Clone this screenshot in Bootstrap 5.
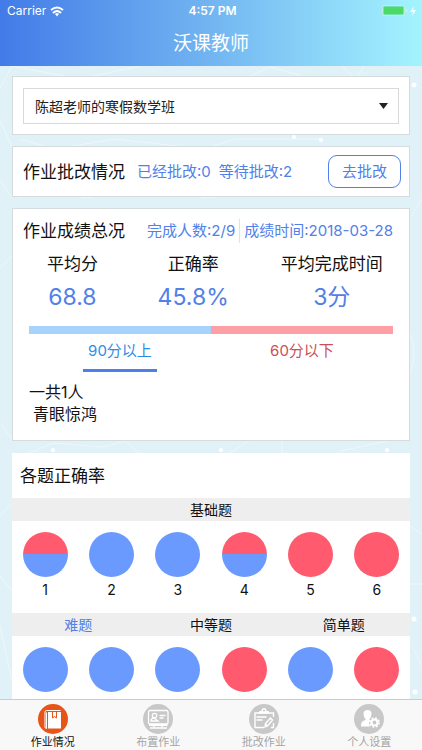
<!DOCTYPE html>
<html lang="zh-CN">
<head>
<meta charset="utf-8">
<meta name="viewport" content="width=device-width, initial-scale=1">
<title>沃课教师</title>
<link href="https://cdn.jsdelivr.net/npm/bootstrap@5.3.0/dist/css/bootstrap.min.css" rel="stylesheet">
<style>
body { font-family: Inter, "Noto Sans CJK SC", sans-serif; font-size: 16px; line-height: 22px; color: #111; background: #e0f1f7; }
.app-shell { height: 100vh; overflow: hidden; }
.app-header { background: linear-gradient(90deg, #427be8, #72b5f1 50%, #a4f4ff); }
.status-bar { font-size: 12px; line-height: 22px; padding: 0 4px 0 7px; }
.app-title { font-size: 19px; line-height: 24px; padding: 10px 0; font-weight: 400; }
.content-area { position: relative; min-height: 0; overflow: hidden; padding: 10px 12px 0; }
.network-art { position: absolute; inset: 0; width: 100%; height: 100%; }
.content-stack { position: relative; gap: 11px; }
.panel { background: #fff; border: 1px solid #d6dcde; }
.select-wrap { padding: 11px 10px 10px; }
.class-select { font-size: 14px; line-height: 28px; border: 1px solid #d9d9d9; border-radius: 0; color: #222; padding: 4px 32px 2px 11px; background-position: right 10px center; background-size: 9px 6px;
  background-image: url("data:image/svg+xml,%3Csvg xmlns='http://www.w3.org/2000/svg' viewBox='0 0 9 6'%3E%3Cpath d='M0 0h9L4.500 6z' fill='%23222'/%3E%3C/svg%3E"); }
.section-title { font-size: 17px; line-height: 24px; font-weight: 400; }
.panel-row { padding-left: 10px; padding-right: 8px; }
.tone-blue { color: #5180e8; }
.detail { font-size: 15px; line-height: 24px; }
.detail-count { padding-right: 4px; }
.detail-date { padding-left: 4px; }
.btn-review { --bs-btn-color: #5180e8; --bs-btn-border-color: #5180e8; --bs-btn-font-size: 15px; --bs-btn-line-height: 23px; --bs-btn-padding-x: 13px; --bs-btn-padding-y: 4px; --bs-btn-border-radius: 9px; --bs-btn-hover-bg: #5180e8; --bs-btn-hover-color: #fff; }
.stats { display: grid; grid-template-columns: 30% 31% 39%; margin-top: 9px; }
.overview-head { padding-top: 10px; }
.stat-name { font-size: 17px; line-height: 24px; }
.stat-value { font-size: 23px; line-height: 32px; margin-top: 5px; }
.score-bar { height: 8px; border-radius: 0; margin: 13px 16px 0; }
.bar-high { background: #a6d2fd; }
.bar-low { background: #fd9fa4; }
.score-tabs { margin: 0 16px; }
.score-tabs button { font-size: 15px; line-height: 24px; padding: 5px 5px 6px; border-bottom: 3px solid transparent; }
.score-tabs .tab-high { color: #2f8ce5; border-color: #4a7ff0; }
.score-tabs .tab-low { color: #cc4f56; }
.student-list { padding: 9px 16px 15px; }
.by-question { background: #fff; padding-top: 11px; margin-top: 1px; }
.by-question .section-title { padding: 0 8px 10px; }
.group-bar { background: #eee; font-size: 14px; line-height: 23px; }
.questions { display: grid; grid-template-columns: repeat(6, 1fr); padding: 11px 0 0; }
.disc { width: 45px; height: 45px; border-radius: 50%; background: #6b9aff; }
.disc-wrong { background: #ff5a6e; }
.disc-half { background: linear-gradient(#ff5a6e 50%, #6b9aff 50%); }
.question-no { font-size: 14px; line-height: 20px; padding: 3px 0 13px; }
.tab-bar { background: #f8f8f8; border-top: 1px solid #c9cdcf; padding: 4px 0 0; }
.tab-bar a { color: #a5a5a5; font-size: 11px; line-height: 16px; text-decoration: none; }
.tab-bar a.active { color: #111; }
.tab-bar svg { width: 30px; height: 30px; }
</style>
</head>
<body>
<div class="app-shell d-flex flex-column">
  <header class="app-header text-white">
    <div class="status-bar row g-0">
      <div class="col d-flex align-items-center"><span class="me-1">Carrier</span>
        <svg width="14" height="11" viewBox="0 0 14 11" fill="none" stroke="#fff" stroke-width="2"><path d="M1 4Q7-1 13 4M3 7Q7 3 11 7"/><path d="M5 8Q7 6 9 8L7 10.500z" fill="#fff" stroke="none"/></svg>
      </div>
      <div class="col text-center fw-semibold">4:57 PM</div>
      <div class="col d-flex align-items-center justify-content-end">
        <svg width="36" height="12" viewBox="0 0 36 12"><rect x=".5" y=".5" width="22" height="10" rx="2" fill="none" stroke="#bdeedd"/><rect x="1.500" y="1.500" width="20" height="8" rx="1" fill="#4cd964"/><path d="M24 4q2 1.500 0 3z" fill="#d8faff"/><path d="M32 1l-4 6h3l-1 4 4-6h-3z" fill="#fff"/></svg>
      </div>
    </div>
    <h1 class="app-title text-center m-0">沃课教师</h1>
  </header>
  <main class="content-area flex-grow-1">
    <svg class="network-art" viewBox="0 0 422 633" preserveAspectRatio="none" aria-hidden="true">
      <g fill="none" stroke="#f3fafc" stroke-width="1" opacity=".7"><path d="M0 22L12 0 80 13 140 0M250 10L270 1 300 9M342 0l14 14 8-14M0 55l12 26M0 115l13 17M20 73l35 10 60-10 90 10 30-10 85 0M0 202l12-12M20 132l25-13 40 13 80-13 40 13 90-10M412 150l10-18M410 268q8 17 0 41M0 357l12 16M18 392l35-15 50 4 22-6 20 17M230 387l22-14 30 0v14M340 385l48-10 22-4M0 510l12 15M0 450l12-13M410 460l12 8M410 518h12M0 560l12 55M412 580l10 20"/></g>
      <g fill="#fff"><circle cx="414" cy="19" r="2.500"/><circle cx="294" cy="71" r="2"/><circle cx="321" cy="74" r="2"/><circle cx="53" cy="384" r="2"/><circle cx="221" cy="384" r="2"/><circle cx="387" cy="384" r="2"/><circle cx="414" cy="553" r="2.500"/><circle cx="415" cy="626" r="2.500"/></g>
    </svg>
    <div class="content-stack d-flex flex-column">
      <section class="panel select-wrap">
        <label class="visually-hidden" for="classSel">班级</label>
        <select id="classSel" class="form-select class-select"><option>陈超老师的寒假数学班</option></select>
      </section>
      <section class="panel panel-row d-flex align-items-center py-2">
        <h2 class="section-title mb-0 text-nowrap">作业批改情况</h2>
        <span class="detail tone-blue ms-2 ps-1 me-2 text-nowrap">已经批改:0</span>
        <span class="detail tone-blue text-nowrap">等待批改:2</span>
        <button type="button" class="btn btn-review ms-auto text-nowrap">去批改</button>
      </section>
      <section class="panel">
        <div class="panel-row overview-head d-flex align-items-center">
          <h2 class="section-title mb-0 text-nowrap">作业成绩总况</h2>
          <span class="detail detail-count tone-blue ms-auto border-end text-nowrap">完成人数:2/9</span>
          <span class="detail detail-date tone-blue me-2 text-nowrap">成绩时间:2018-03-28</span>
        </div>
        <div class="stats text-center">
          <div><div class="stat-name">平均分</div><div class="stat-value tone-blue">68.8</div></div>
          <div><div class="stat-name">正确率</div><div class="stat-value tone-blue">45.8%</div></div>
          <div><div class="stat-name">平均完成时间</div><div class="stat-value tone-blue">3分</div></div>
        </div>
        <div class="progress score-bar"><div class="bar-high w-50"></div><div class="bar-low w-50"></div></div>
        <div class="score-tabs row g-0 text-center">
          <div class="col"><button type="button" class="btn rounded-0 border-top-0 border-start-0 border-end-0 tab-high">90分以上</button></div>
          <div class="col"><button type="button" class="btn rounded-0 border-top-0 border-start-0 border-end-0 tab-low">60分以下</button></div>
        </div>
        <div class="student-list"><div>一共1人</div><div class="ps-1">青眼惊鸿</div></div>
      </section>
      <section class="by-question">
        <h2 class="section-title mb-0">各题正确率</h2>
        <div class="group-bar text-center">基础题</div>
        <div class="questions text-center">
          <div><div class="disc disc-half mx-auto"></div><div class="question-no">1</div></div>
          <div><div class="disc mx-auto"></div><div class="question-no">2</div></div>
          <div><div class="disc mx-auto"></div><div class="question-no">3</div></div>
          <div><div class="disc disc-half mx-auto"></div><div class="question-no">4</div></div>
          <div><div class="disc disc-wrong mx-auto"></div><div class="question-no">5</div></div>
          <div><div class="disc disc-wrong mx-auto"></div><div class="question-no">6</div></div>
        </div>
        <div class="group-bar row g-0 text-center"><div class="col tone-blue">难题</div><div class="col">中等题</div><div class="col">简单题</div></div>
        <div class="questions pb-3">
          <div class="disc mx-auto"></div><div class="disc mx-auto"></div><div class="disc mx-auto"></div>
          <div class="disc disc-wrong mx-auto"></div><div class="disc mx-auto"></div><div class="disc disc-wrong mx-auto"></div>
        </div>
      </section>
    </div>
  </main>
  <nav class="tab-bar row g-0 text-center">
    <a href="#" class="col active d-flex flex-column align-items-center" aria-current="page">
      <svg viewBox="0 0 30 30"><circle cx="15" cy="15" r="15" fill="#e85418"/><path d="M22.500 6.500H8.500q-1.500 0-1.500 1.500v15q0 1.500 1.500 1.500V8.500" fill="none" stroke="#fff"/><path d="M10 8h13v16.500H10z" fill="#fff"/><path d="M14.500 8v6l2-1.500 2 1.500V8M18.500 8v6" fill="none" stroke="#e85418"/></svg>作业情况</a>
    <a href="#" class="col d-flex flex-column align-items-center">
      <svg viewBox="0 0 30 30"><circle cx="15" cy="15" r="15" fill="#c8c8c8"/><g fill="none" stroke="#fff" stroke-width="1.300"><rect x="5.500" y="6.500" width="19.500" height="13.500" rx="1.500"/><circle cx="11.500" cy="11.500" r="2.200"/><path d="M8 17q0-3 3-3l4 3zM16.500 11.500h6M16.500 14h4"/></g><path d="M6 20h18.500v2H6z" fill="#fff"/><path d="M11 20v3M19 20v3M7 24h17" stroke="#fff" stroke-width="1.500"/></svg>布置作业</a>
    <a href="#" class="col d-flex flex-column align-items-center">
      <svg viewBox="0 0 30 30"><circle cx="15" cy="15" r="15" fill="#c8c8c8"/><g fill="none" stroke="#fff" stroke-width="1.400"><path d="M15 23.500H6V9h18.500v4M24.500 19v4.500H22M7.500 13h10M7.500 16h6"/><path d="M16 23l.500-3.500L21.500 14l2 2-5 6zM16.500 20l2 2"/></g><path d="M9.500 9.500l1-2.500h2q0-3 2.500-3t2.500 3h2l1 2.500z" fill="#fff"/><circle cx="15" cy="6.500" r="1" fill="#c8c8c8"/></svg>批改作业</a>
    <a href="#" class="col d-flex flex-column align-items-center">
      <svg viewBox="0 0 30 30"><circle cx="15" cy="15" r="15" fill="#c8c8c8"/><path d="M9.500 10q0-4 4-4t4 4q0 3-2 5v1l1 .500q-3 3 0 6H7q0-4.500 2-5.500l2.500-1v-1q-2-2-2-5z" fill="#fff"/><circle cx="20.500" cy="18.500" r="3" fill="#c8c8c8" stroke="#fff" stroke-width="2.200"/><circle cx="20.500" cy="18.500" r="4.600" fill="none" stroke="#fff" stroke-width="1.500" stroke-dasharray="1.900 1.713"/></svg>个人设置</a>
  </nav>
</div>
<script src="https://cdn.jsdelivr.net/npm/bootstrap@5.3.0/dist/js/bootstrap.bundle.min.js"></script>
</body>
</html>
